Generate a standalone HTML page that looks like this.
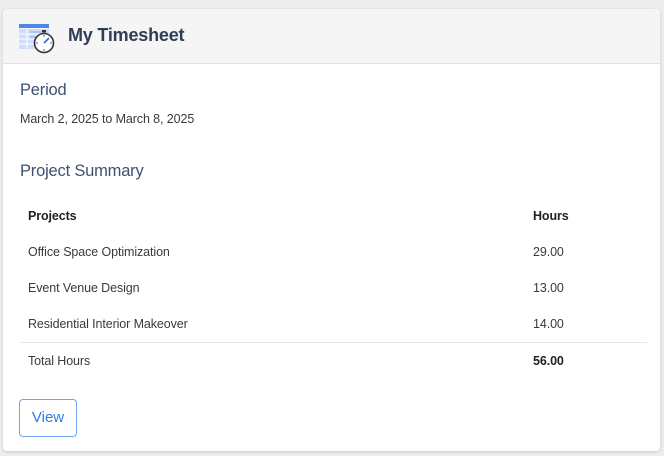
<!DOCTYPE html>
<html><head><meta charset="utf-8"><style>
*{margin:0;padding:0;box-sizing:border-box}
body{width:664px;height:456px;background:#ededed;font-family:"Liberation Sans",sans-serif;position:relative;overflow:hidden}
.card{position:absolute;left:3px;top:9px;width:657px;height:442px;background:#fff;border-radius:4px;box-shadow:0 1px 3px rgba(0,0,0,.15);overflow:hidden}
.hd{height:55px;background:#f5f5f6;border-bottom:1px solid #e2e2e2;position:relative}
.hd svg{position:absolute;left:16px;top:14px}
.hd h1{position:absolute;left:65px;top:16px;font-size:18px;font-weight:bold;color:#2f3e55;letter-spacing:-0.2px}
.t{position:absolute;color:#3e5170;font-size:16.5px;letter-spacing:-0.2px}
.s{position:absolute;font-size:12.5px;color:#3a3a3a;letter-spacing:-0.1px}
.b{font-weight:bold;color:#222}
.line{position:absolute;left:17px;width:627px;top:333px;height:1px;background:#e6e6e6}
.btn{position:absolute;left:16px;top:390px;width:58px;height:38px;border:1px solid #6ea4f0;border-radius:4px;color:#2f7ae5;font-size:15px;text-align:center;line-height:36px}
</style></head><body>
<div class="card">
<div class="hd">
<svg width="40" height="34" viewBox="0 0 40 34">
<rect x="0" y="1" width="30" height="4" fill="#4f86e8"/>
<rect x="0" y="6" width="30" height="20" fill="#cfdcfa"/>
<g stroke="#fff" stroke-width="1"><line x1="0" y1="11" x2="30" y2="11"/><line x1="0" y1="16" x2="30" y2="16"/><line x1="0" y1="21" x2="30" y2="21"/><line x1="8" y1="6" x2="8" y2="26"/></g>
<g stroke="#8aa8ee" stroke-width="1"><line x1="11" y1="9" x2="22" y2="9"/><line x1="11" y1="14" x2="20" y2="14"/></g>
<circle cx="25" cy="20" r="9.5" fill="#fff" stroke="#333" stroke-width="1.6"/>
<rect x="23" y="7" width="4" height="2.5" fill="#333"/>
<line x1="25" y1="20" x2="30" y2="15" stroke="#2f6fe0" stroke-width="1.8"/>
<g fill="#333"><circle cx="25" cy="13" r=".7"/><circle cx="25" cy="27" r=".7"/><circle cx="18" cy="20" r=".7"/><circle cx="32" cy="20" r=".7"/></g>
</svg>
<h1>My Timesheet</h1>
</div>
<div class="t" style="left:17px;top:72px">Period</div>
<div class="s" style="left:17px;top:103px">March 2, 2025 to March 8, 2025</div>
<div class="t" style="left:17px;top:153px">Project Summary</div>
<div class="s b" style="left:25px;top:200px">Projects</div>
<div class="s b" style="left:530px;top:200px">Hours</div>
<div class="s" style="left:25px;top:236px">Office Space Optimization</div>
<div class="s" style="left:530px;top:236px">29.00</div>
<div class="s" style="left:25px;top:272px">Event Venue Design</div>
<div class="s" style="left:530px;top:272px">13.00</div>
<div class="s" style="left:25px;top:308px">Residential Interior Makeover</div>
<div class="s" style="left:530px;top:308px">14.00</div>
<div class="line"></div>
<div class="s" style="left:25px;top:345px">Total Hours</div>
<div class="s b" style="left:530px;top:345px">56.00</div>
<div class="btn">View</div>
</div>
</body></html>
